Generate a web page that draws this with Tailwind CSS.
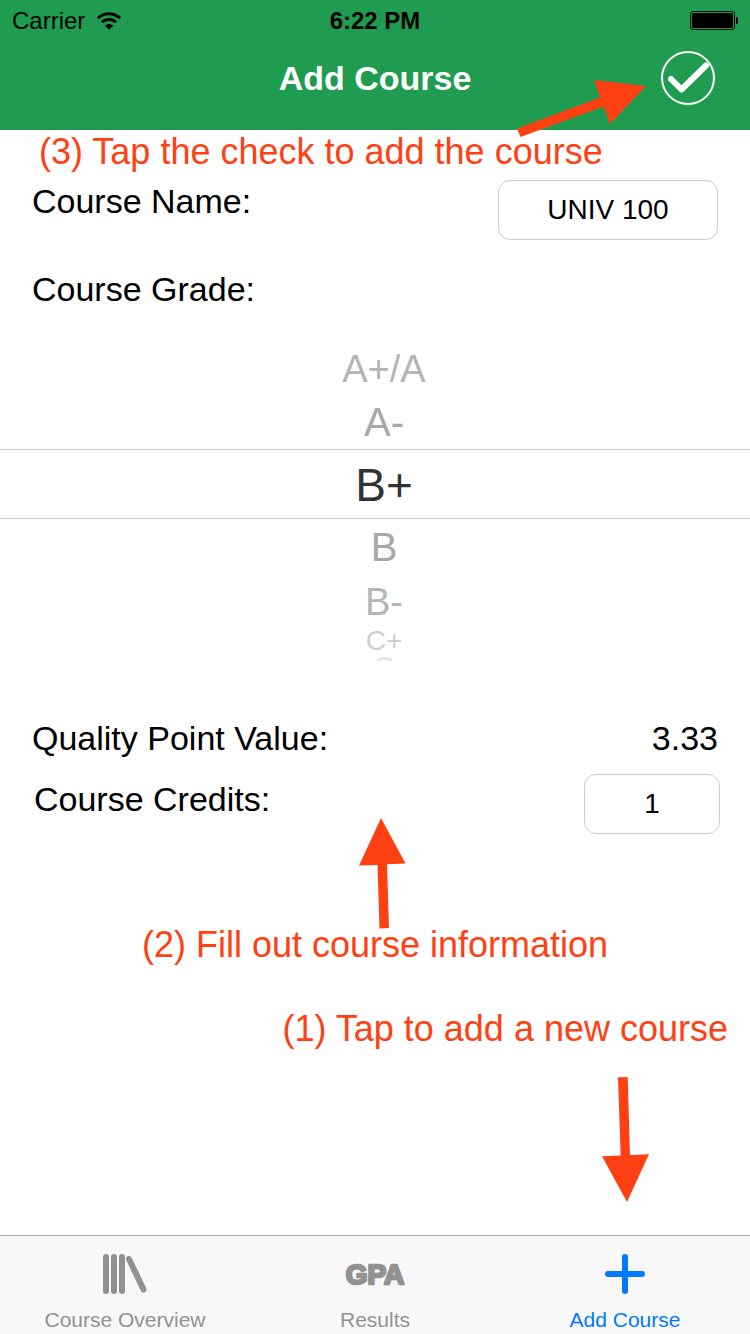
<!DOCTYPE html>
<html lang="en">
<head>
<meta charset="utf-8">
<meta name="viewport" content="width=device-width, initial-scale=1">
<title>Add Course</title>
<script src="https://cdn.jsdelivr.net/npm/@tailwindcss/browser@4"></script>
</head>
<body class="flex min-h-screen flex-col bg-white font-['Liberation_Sans',Arial,sans-serif] text-black">
  <header class="relative bg-[#1f9c4f] pb-[30px]">
    <div class="grid h-10 grid-cols-3 items-center px-3 pt-px text-2xl">
      <div class="flex items-center gap-3">
        <span>Carrier</span>
        <svg class="h-5 w-6" viewBox="0 0 24 20" fill="none" stroke="#000" aria-label="Wi-Fi">
          <path d="M1 7.200a15.600 15.600 0 0 1 22 0" stroke-width="3"/>
          <path d="M5 11.300a10 10 0 0 1 14 0" stroke-width="3"/>
          <path d="M12 18.800L7.800 14.800a6 6 0 0 1 8.400 0z" fill="#000" stroke="none"/>
        </svg>
      </div>
      <span class="text-center font-bold">6:22 PM</span>
      <svg class="h-5 w-12 justify-self-end" viewBox="0 0 48 20" aria-label="Battery full">
        <rect x="0.5" y="0.5" width="44" height="18" rx="3" fill="none" stroke="#000"/>
        <rect x="2" y="2" width="41" height="15" rx="2" fill="#000"/>
        <path d="M46 6c1.500 0 2.500 1.500 2.500 3.500s-1 3.500-2.500 3.500z" fill="#000"/>
      </svg>
    </div>
    <div class="grid grid-cols-[1fr_auto_1fr] items-center px-8 pt-4">
      <h1 class="col-start-2 text-[34px] leading-10 font-bold text-white">Add Course</h1>
      <button type="button" aria-label="Save course" class="-my-2 justify-self-end">
        <svg class="block size-15" viewBox="0 0 60 60" fill="none" stroke="#fff">
          <circle cx="30" cy="30" r="26" stroke-width="2"/>
          <path d="M13 31l10.500 10.500L48 17.500" stroke-width="6" stroke-linecap="round" stroke-linejoin="round"/>
        </svg>
      </button>
    </div>
    <svg class="absolute top-20 right-[104px] z-10 h-[58px] w-[130px]" viewBox="0 0 130 58" fill="#ff4013" aria-hidden="true">
      <path d="M1 48.500L84 17.500 78 0l52 6-36 38-6.300-17.500L4.500 57z"/>
    </svg>
  </header>

  <main class="flex flex-1 flex-col">
    <p class="pl-[39px] text-4xl leading-[44px] text-[#ff4013]">(3) Tap the check to add the course</p>

    <form class="flex flex-col text-[34px] leading-[42px]">
      <div class="flex items-start justify-between px-8 pt-1.5">
        <label for="name">Course Name:</label>
        <input id="name" type="text" value="UNIV 100" class="h-15 w-[220px] rounded-xl border border-[#cccccc] bg-white text-center text-[28px]">
      </div>

      <fieldset>
        <legend class="px-8 pt-7">Course Grade:</legend>
        <div class="mt-8 flex flex-col pb-14 text-center">
          <label class="h-[54px] pl-[18px] text-[38px] leading-[54px] text-[#b4b4b4]"><input type="radio" name="grade" class="sr-only">A+/A</label>
          <label class="h-[53px] pl-[18px] text-[40px] leading-[53px] text-[#a8a8a8]"><input type="radio" name="grade" class="sr-only">A-</label>
          <label class="h-[70px] border-y border-[#c8c8c8] pl-[18px] text-[46px] leading-[70px] text-[#333333]"><input type="radio" name="grade" checked class="sr-only">B+</label>
          <label class="h-14 pl-[18px] text-[40px] leading-[56px] text-[#a8a8a8]"><input type="radio" name="grade" class="sr-only">B</label>
          <label class="h-[54px] pl-[18px] text-[38px] leading-[54px] text-[#b6b6b6]"><input type="radio" name="grade" class="sr-only">B-</label>
          <label class="h-6 pl-[18px] text-[28px] leading-6 text-[#d0d0d0]"><input type="radio" name="grade" class="sr-only">C+</label>
          <label class="h-2 overflow-hidden pl-[18px] text-[28px] leading-7 text-[#e2e2e2]"><input type="radio" name="grade" class="sr-only">C</label>
        </div>
      </fieldset>

      <div class="flex justify-between px-8">
        <span>Quality Point Value:</span>
        <output>3.33</output>
      </div>
      <div class="flex items-start justify-between pt-[15px] pr-[30px] pl-[34px]">
        <label for="credits" class="pt-1">Course Credits:</label>
        <input id="credits" type="text" inputmode="numeric" value="1" class="h-15 w-[136px] rounded-xl border border-[#cccccc] bg-white text-center text-[28px]">
      </div>
    </form>

    <div class="relative mt-[89px] text-center text-4xl leading-[44px] text-[#ff4013]">
      <p>(2) Fill out course information</p>
      <svg class="absolute bottom-[38px] left-1/2 -ml-4 h-[111px] w-[47px]" viewBox="0 0 47 111" fill="#ff4013" aria-hidden="true">
        <path d="M22 0l24.500 45.500-18.500.700L30 110l-9.500.500L18.500 47 0 47.500z"/>
      </svg>
    </div>

    <div class="mt-10 flex flex-col items-end pr-[22px] text-4xl leading-[44px] text-[#ff4013]">
      <p>(1) Tap to add a new course</p>
      <svg class="mt-[26px] mr-[79px] h-[125px] w-[47px]" viewBox="0 0 47 125" fill="#ff4013" aria-hidden="true">
        <path d="M16 0.300L25.700 0 28 78l19-.800L25 125 0 79.300l18.700-.800z"/>
      </svg>
    </div>
  </main>

  <nav class="grid grid-cols-3 border-t border-[#b0b0b0] bg-[#f8f8f8] text-[21px] leading-6 text-[#929292]">
    <a href="#overview" class="flex flex-col items-center gap-3.5 pt-[18px] pb-0.5">
      <svg class="h-10 w-11" viewBox="0 0 44 40" fill="none" stroke="currentColor" stroke-width="6" stroke-linecap="round" aria-hidden="true">
        <path d="M3 3v34M11 3v34M19 3v34M26 5l14.500 30.500"/>
      </svg>
      <span>Course Overview</span>
    </a>
    <a href="#results" class="flex flex-col items-center gap-3.5 pt-[18px] pb-0.5">
      <svg class="h-10 w-16" viewBox="0 0 64 40" aria-hidden="true">
        <text x="32" y="30" text-anchor="middle" font-size="28" font-weight="700" fill="currentColor" stroke="currentColor" stroke-width="2.500" stroke-linejoin="round">GPA</text>
      </svg>
      <span>Results</span>
    </a>
    <a href="#add" aria-current="page" class="flex flex-col items-center gap-3.5 pt-[18px] pb-0.5 text-[#007aff]">
      <svg class="size-10" viewBox="0 0 40 40" fill="none" stroke="currentColor" stroke-width="6" stroke-linecap="round" aria-hidden="true">
        <path d="M20 3v34M3 20h34"/>
      </svg>
      <span>Add Course</span>
    </a>
  </nav>
</body>
</html>
